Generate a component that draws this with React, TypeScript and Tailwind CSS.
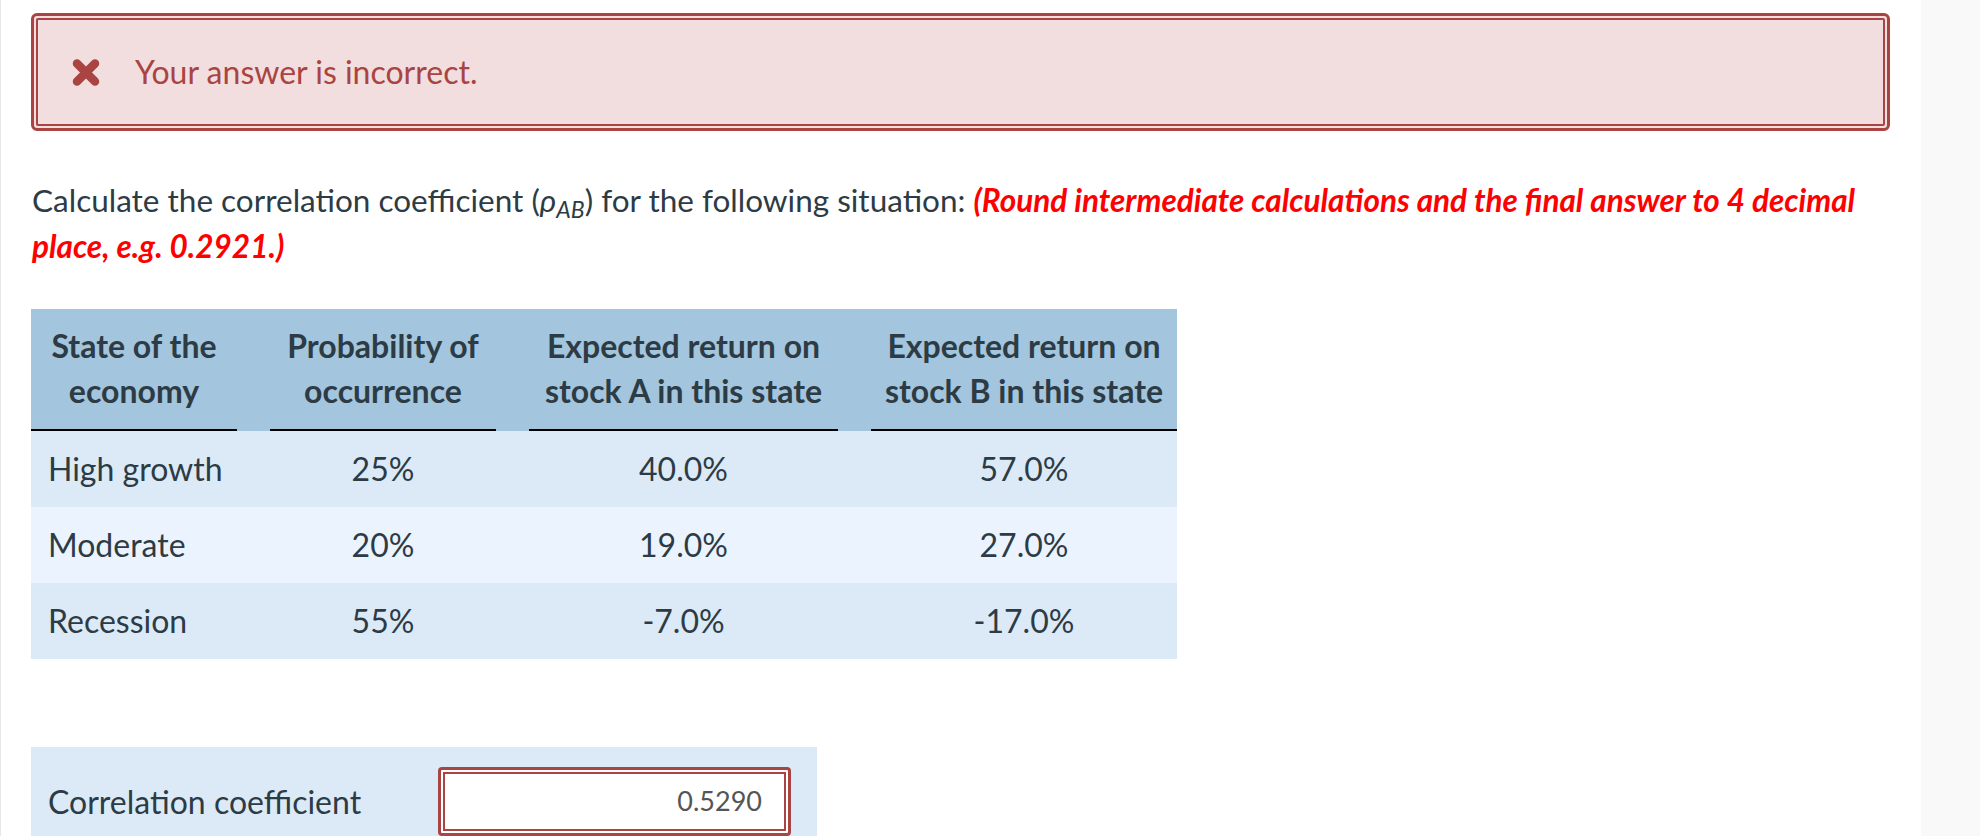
import React from 'react';

const rows = [
  { state: 'High growth', prob: '25%', a: '40.0%', b: '57.0%', bg: 'bg-[#dceaf7]' },
  { state: 'Moderate', prob: '20%', a: '19.0%', b: '27.0%', bg: 'bg-[#ebf4fe]' },
  { state: 'Recession', prob: '55%', a: '-7.0%', b: '-17.0%', bg: 'bg-[#dceaf7]' },
];

const headers: [string, string][] = [
  ['State of the', 'economy'],
  ['Probability of', 'occurrence'],
  ['Expected return on', 'stock A in this state'],
  ['Expected return on', 'stock B in this state'],
];

const cols = 'grid grid-cols-[206px_226px_309px_306px] gap-x-[33px]';

const CrossIcon: React.FC = () => (
  <svg width="28" height="29" viewBox="0 0 28 29" className="shrink-0">
    <path d="M5 5.5 L23 23.5 M23 5.5 L5 23.5" stroke="#a94442" strokeWidth="8.5" strokeLinecap="round" />
  </svg>
);

const App: React.FC = () => {
  return (
    <div className="flex h-[836px] overflow-hidden bg-white font-['Lato',sans-serif] text-[#2d3b45]">
      <main className="flex-1 border-l border-[#e8e8e8] pl-[30px] pr-[31px] pt-[13px]">
        {/* feedback */}
        <div className="rounded-[6px] border-[3px] border-[#a94442] bg-[#f2dede] p-[2px]">
          <div className="flex h-[108px] items-center gap-[35px] rounded-[2px] border-2 border-[#a94442] pl-[34px]">
            <CrossIcon />
            <span className="text-[32px] text-[#a94442]">Your answer is incorrect.</span>
          </div>
        </div>

        {/* question */}
        <p className="mt-[46px] pl-[1px] text-[31.5px] leading-[46px]">
          <span>Calculate the correlation coefficient (</span>
          <span className="italic">ρ<sub className="text-[23px] italic">AB</sub></span>
          <span>) for the following situation: </span>
          <span className="font-bold italic text-[#ff0000]">(Round intermediate calculations and the final answer to 4 decimal</span>
          <br />
          <span className="font-bold italic text-[#ff0000]">place, e.g. 0.2921.)</span>
        </p>

        {/* table */}
        <div className="mt-[40px] w-[1146px] text-[32px]">
          <div className={`${cols} bg-[#a3c5dd] pt-[14px] font-bold`}>
            {headers.map(([l1, l2]) => (
              <div key={l2} className="border-b-2 border-black pb-[16px] text-center leading-[45px]">
                {l1}
                <br />
                {l2}
              </div>
            ))}
          </div>
          {rows.map((r) => (
            <div key={r.state} className={`${cols} ${r.bg} h-[76px] items-center`}>
              <div className="pl-[17px]">{r.state}</div>
              <div className="text-center">{r.prob}</div>
              <div className="text-center">{r.a}</div>
              <div className="text-center">{r.b}</div>
            </div>
          ))}
        </div>

        {/* answer */}
        <div className="mt-[88px] flex w-[786px] items-center justify-between bg-[#dceaf7] py-[20px] pl-[17px] pr-[26px]">
          <span className="text-[32px]">Correlation coefficient</span>
          <div className="rounded-[4px] border-[3px] border-[#a94442] bg-white p-[2px]">
            <div className="flex h-[59px] w-[343px] items-center justify-end border-2 border-[#a94442] pr-[22px] text-[27px] text-[#555]">
              0.5290
            </div>
          </div>
        </div>
      </main>
      <aside className="w-[59px] shrink-0 bg-[#f9f9f9]" />
    </div>
  );
};

export default App;
